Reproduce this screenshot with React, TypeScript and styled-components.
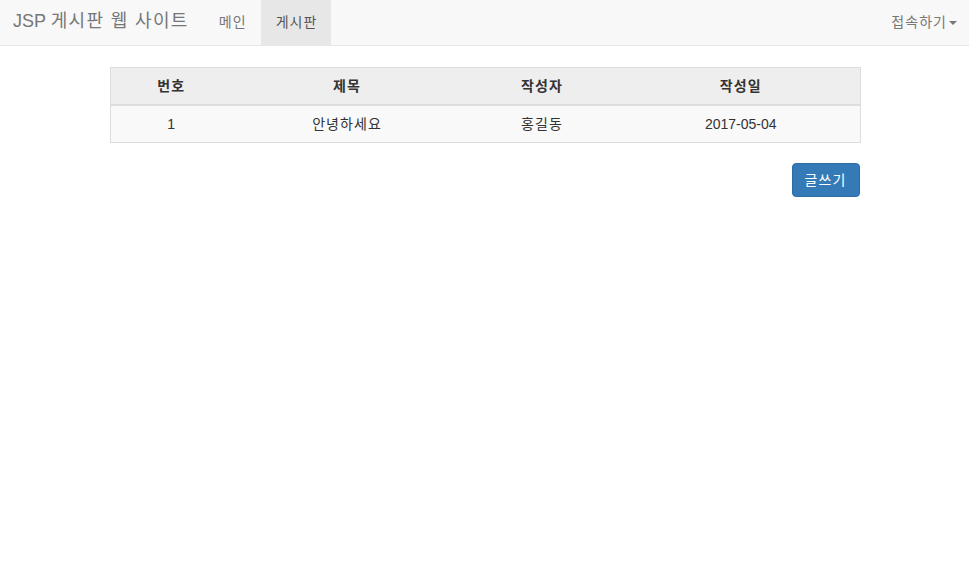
import React from "react";
import styled, { createGlobalStyle } from "styled-components";

const Global = createGlobalStyle`
  html, body { margin: 0; padding: 0; background: #fff; }
  body {
    font-family: "Liberation Sans", Arial, "Noto Sans CJK KR", sans-serif;
    font-size: 14px;
    line-height: 20px;
    color: #333;
  }
  * { box-sizing: border-box; }
`;

const Ko = styled.span`
  letter-spacing: 0.075em;
`;

const Navbar = styled.nav`
  height: 46px;
  background: #f8f8f8;
  border-bottom: 1px solid #e7e7e7;
  display: flex;
  align-items: stretch;
`;

const Brand = styled.a`
  display: block;
  padding: 10px 15px 0 13px;
  line-height: 22px;
  font-size: 18px;
  color: #777;
  text-decoration: none;
  white-space: nowrap;
`;

const NavList = styled.ul`
  list-style: none;
  margin: 0;
  padding: 0;
  display: flex;
  align-items: stretch;
`;

const NavItem = styled.li<{ $active?: boolean }>`
  display: flex;
  align-items: center;
  padding: 0 14px 2px 15px;
  color: ${(p) => (p.$active ? "#555" : "#777")};
  background: ${(p) => (p.$active ? "#e7e7e7" : "transparent")};
  white-space: nowrap;
`;

const Spacer = styled.div`
  flex: 1;
`;

const Dropdown = styled.div`
  display: flex;
  align-items: center;
  padding: 0 12px 2px 15px;
  color: #777;
  white-space: nowrap;
`;

const Caret = styled.span`
  display: inline-block;
  width: 0;
  height: 0;
  margin-left: 2px;
  margin-top: 2px;
  border-top: 4px solid #777;
  border-left: 4px solid transparent;
  border-right: 4px solid transparent;
`;

const Container = styled.div`
  width: 750px;
  margin: 21px auto 0;
`;

const Table = styled.table`
  width: 750px;
  border-collapse: collapse;
  border: 1px solid #ddd;
  table-layout: fixed;
  margin-bottom: 20px;
`;

const Th = styled.th<{ $w: number }>`
  width: ${(p) => p.$w}px;
  background: #eee;
  font-weight: bold;
  text-align: center;
  padding: 8px;
  line-height: 20px;
  border-bottom: 2px solid #ddd;
  color: #333;
`;

const Td = styled.td`
  background: #f9f9f9;
  text-align: center;
  padding: 8px;
  line-height: 20px;
  color: #333;
`;

const Actions = styled.div`
  display: flex;
  justify-content: flex-end;
`;

const Button = styled.button`
  font-family: inherit;
  font-size: 14px;
  line-height: 20px;
  height: 34px;
  width: 68px;
  color: #fff;
  background: #337ab7;
  border: 1px solid #2e6da4;
  border-radius: 4px;
  padding: 6px 0;
  cursor: pointer;
`;

const cols = [
  { label: "번호", w: 122 },
  { label: "제목", w: 230 },
  { label: "작성자", w: 160 },
  { label: "작성일", w: 238 },
];

const rows = [
  { id: "1", title: "안녕하세요", author: "홍길동", date: "2017-05-04" },
];

export default function App() {
  return (
    <>
      <Global />
      <Navbar>
        <Brand href="#">
          JSP <Ko>게시판 웹 사이트</Ko>
        </Brand>
        <NavList>
          <NavItem>
            <Ko>메인</Ko>
          </NavItem>
          <NavItem $active>
            <Ko>게시판</Ko>
          </NavItem>
        </NavList>
        <Spacer />
        <Dropdown>
          <Ko>접속하기</Ko>
          <Caret />
        </Dropdown>
      </Navbar>
      <Container>
        <Table>
          <thead>
            <tr>
              {cols.map((c) => (
                <Th key={c.label} $w={c.w}>
                  <Ko>{c.label}</Ko>
                </Th>
              ))}
            </tr>
          </thead>
          <tbody>
            {rows.map((r) => (
              <tr key={r.id}>
                <Td>{r.id}</Td>
                <Td>
                  <Ko>{r.title}</Ko>
                </Td>
                <Td>
                  <Ko>{r.author}</Ko>
                </Td>
                <Td>{r.date}</Td>
              </tr>
            ))}
          </tbody>
        </Table>
        <Actions>
          <Button>
            <Ko>글쓰기</Ko>
          </Button>
        </Actions>
      </Container>
    </>
  );
}
